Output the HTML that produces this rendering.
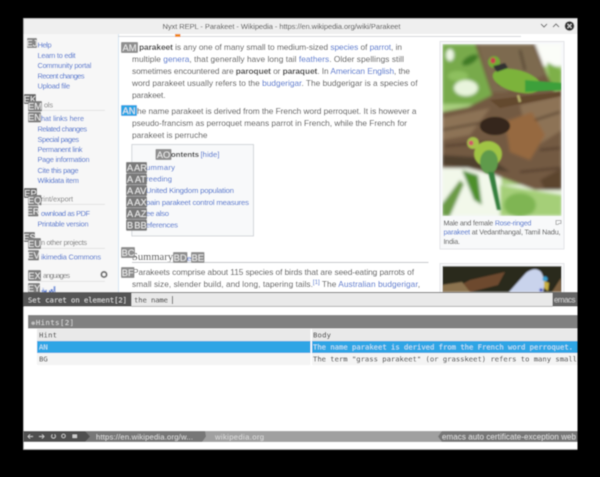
<!DOCTYPE html>
<html><head><meta charset="utf-8"><style>
html,body{margin:0;padding:0;background:#000;width:600px;height:477px;overflow:hidden}
svg{display:block}
text{font-family:"Liberation Sans",sans-serif;white-space:pre}
.t{font-size:8.3px;fill:#3c3c3c}
.l{fill:#3366cc}
.s{font-size:7.3px;fill:#3366cc}
.h{font-size:7.3px;fill:#777}
.c{font-size:7.7px;fill:#3366cc}
.cap{font-size:7.1px;fill:#444}
.m{font-family:"DejaVu Sans Mono","Liberation Mono",monospace;font-size:7.2px}
.k{font-size:9.4px;fill:#eee;text-anchor:middle}
.b{font-weight:bold;fill:#222}
</style></head><body>
<svg width="600" height="477" viewBox="0 0 600 477" xmlns="http://www.w3.org/2000/svg">
<defs>
<filter id="g" x="-2%" y="-2%" width="104%" height="104%"><feGaussianBlur stdDeviation="0.42"/></filter>
<filter id="i" x="-5%" y="-5%" width="110%" height="110%"><feGaussianBlur stdDeviation="1.5"/></filter>
<filter id="j" x="-5%" y="-5%" width="110%" height="110%"><feGaussianBlur stdDeviation="0.7"/></filter>
<clipPath id="c1"><rect x="442.5" y="44" width="119" height="172"/></clipPath>
<clipPath id="c2"><rect x="442.5" y="266" width="119" height="26"/></clipPath>
</defs>
<rect width="600" height="477" fill="#000"/>
<g filter="url(#g)">
<!-- window -->
<rect x="23" y="18" width="554.5" height="431.5" fill="#fff"/>
<rect x="23" y="18" width="554.5" height="16" fill="#efefef"/>
<rect x="23" y="18" width="554.5" height="1" fill="#bbb"/>
<rect x="23" y="449" width="554.5" height="1" fill="#999"/>
<rect x="23" y="18" width="0.8" height="432" fill="#999"/>
<text x="162.5" y="29" font-size="7.5" fill="#444" textLength="238">Nyxt REPL - Parakeet - Wikipedia - https://en.wikipedia.org/wiki/Parakeet</text>
<path d="M541 24l3 3 3-3M553 27l3-3 3 3" fill="none" stroke="#666" stroke-width="1"/>
<circle cx="569.5" cy="26" r="4.8" fill="#333"/>
<path d="M567.5 24l4 4M571.5 24l-4 4" stroke="#ddd" stroke-width="1"/>
<!-- sidebar -->
<rect x="23.8" y="34" width="94.5" height="258" fill="#f7f7f7"/>
<rect x="118" y="34" width="1" height="258" fill="#d5e4f2"/>
<rect x="118" y="36" width="403" height="0.8" fill="#c8ccd1"/>
<rect x="175" y="34" width="5.5" height="3" fill="#f08a1d"/>
<g class="s">
<text class="s" x="37.5" y="47.5" textLength="14">Help</text>
<text class="s" x="37.5" y="58" textLength="38">Learn to edit</text>
<text class="s" x="37.5" y="68" textLength="54">Community portal</text>
<text class="s" x="37.5" y="78.5" textLength="47">Recent changes</text>
<text class="s" x="37.5" y="88.5" textLength="32.5">Upload file</text>
<text class="h" x="44" y="107.5" textLength="9">ols</text>
<rect x="37" y="110" width="68" height="0.7" fill="#ddd"/>
<text class="s" x="41" y="121" textLength="43">hat links here</text>
<text class="s" x="37.5" y="131.5" textLength="49.5">Related changes</text>
<text class="s" x="37.5" y="142" textLength="41.5">Special pages</text>
<text class="s" x="37.5" y="152" textLength="45">Permanent link</text>
<text class="s" x="37.5" y="162" textLength="52">Page information</text>
<text class="s" x="37.5" y="173" textLength="41">Cite this page</text>
<text class="s" x="37.5" y="183" textLength="41.5">Wikidata item</text>
<text class="h" x="41" y="201.5" textLength="32">rint/export</text>
<rect x="37" y="204" width="68" height="0.7" fill="#ddd"/>
<text class="s" x="41" y="216" textLength="49">ownload as PDF</text>
<text class="s" x="37.5" y="226.5" textLength="51">Printable version</text>
<text class="h" x="41" y="245" textLength="46">n other projects</text>
<rect x="37" y="248" width="68" height="0.7" fill="#ddd"/>
<text class="s" x="41" y="259.5" textLength="60">ikimedia Commons</text>
<text class="h" x="43" y="278" textLength="27">anguages</text>
<rect x="37" y="281" width="68" height="0.7" fill="#ddd"/>
<text class="s" x="41" y="292" textLength="15">العربية</text>
</g>
<circle cx="104" cy="274.5" r="2.6" fill="none" stroke="#777" stroke-width="2"/>
<!-- main text -->
<text class="t" x="139" y="50" textLength="263"><tspan class="b" font-weight="bold">parakeet</tspan> is any one of many small to medium-sized <tspan class="l">species</tspan> of <tspan class="l">parrot</tspan>, in</text>
<text class="t" x="132" y="62" textLength="272">multiple <tspan class="l">genera</tspan>, that generally have long tail <tspan class="l">feathers</tspan>. Older spellings still</text>
<text class="t" x="132" y="74" textLength="278">sometimes encountered are <tspan class="b" font-weight="bold">paroquet</tspan> or <tspan class="b" font-weight="bold">paraquet</tspan>. In <tspan class="l">American English</tspan>, the</text>
<text class="t" x="132" y="86" textLength="285.5">word parakeet usually refers to the <tspan class="l">budgerigar</tspan>. The budgerigar is a species of</text>
<text class="t" x="132" y="98" textLength="33.5">parakeet.</text>
<text class="t" x="137" y="114" textLength="279.5">he name parakeet is derived from the French word perroquet. It is however a</text>
<text class="t" x="132" y="126" textLength="275">pseudo-francism as perroquet means parrot in French, while the French for</text>
<text class="t" x="132" y="138" textLength="75.5">parakeet is perruche</text>
<!-- toc -->
<rect x="131.8" y="144.5" width="121.7" height="91.5" fill="#f8f9fa" stroke="#c8ccd1" stroke-width="0.8"/>
<text x="171" y="157" font-size="7.7" font-weight="bold" fill="#222" textLength="28">ontents</text>
<text x="200.5" y="157" font-size="7.7" fill="#3366cc" textLength="19">[hide]</text>
<text class="c" x="146" y="170" textLength="29">ummary</text>
<text class="c" x="146" y="181.5" textLength="26">reeding</text>
<text class="c" x="146" y="193" textLength="88">United Kingdom population</text>
<text class="c" x="146" y="205" textLength="103">pain parakeet control measures</text>
<text class="c" x="146" y="216" textLength="23">ee also</text>
<text class="c" x="146" y="227.5" textLength="32">eferences</text>
<!-- summary -->
<text x="132" y="260" style="font-family:'Liberation Serif',serif" font-size="10.5" fill="#222" textLength="41">Summary</text>
<text x="187" y="261" font-size="7.7" fill="#3366cc">e</text>
<rect x="132" y="262" width="296.5" height="0.8" fill="#b5b8bc"/>
<text class="t" x="133" y="275" textLength="281">Parakeets comprise about 115 species of birds that are seed-eating parrots of</text>
<text class="t" x="132" y="287" textLength="288">small size, slender build, and long, tapering tails.<tspan class="l" font-size="6" dy="-3">[1]</tspan><tspan dy="3"> The </tspan><tspan class="l">Australian budgerigar</tspan>,</text>
<!-- image 1 -->
<rect x="440" y="41.5" width="124" height="207.5" fill="#f8f9fa" stroke="#e0e2e5" stroke-width="0.9"/>
<g clip-path="url(#c1)">
<g filter="url(#i)">
<rect x="442" y="44" width="120" height="172" fill="#a8cf7e"/>
<rect x="442" y="44" width="50" height="60" fill="#78aa4c"/>
<ellipse cx="466" cy="88" rx="12" ry="8" fill="#e8f4dc"/>
<ellipse cx="450" cy="55" rx="4" ry="6" fill="#eef7e5"/>
<ellipse cx="470" cy="60" rx="9" ry="4" fill="#3f7a28" transform="rotate(-30 470 60)"/>
<ellipse cx="458" cy="76" rx="10" ry="5" fill="#8ec05e"/>
<rect x="532" y="44" width="30" height="22" fill="#fbfdf8"/>
<path d="M547 62L562 70V90H550Z" fill="#7eb04a"/>
<rect x="442" y="185" width="120" height="31" fill="#e9f3dd"/>
<path d="M442 168H500L505 216H442Z" fill="#f2f8ea"/>
<path d="M500 185L562 195V216H500Z" fill="#a5cf78"/>
<path d="M462 170L478 175 482 205 474 200Z" fill="#4e8f2c"/>
<path d="M442 204L460 180 464 184 450 216H442Z" fill="#6a9a45"/>
<ellipse cx="520" cy="205" rx="16" ry="12" fill="#7fb552"/>
<path d="M442 112L468 107 492 95 475 44H535L547 75 555 92 562 90V190H535L495 175 468 168H442Z" fill="#735a42"/>
<path d="M478 44H532L545 75 505 92 492 92Z" fill="#7d6a50"/>
<path d="M442 118L490 108 470 135 442 140ZM520 105L562 96V130L530 150Z" fill="#8d7356"/>
<path d="M442 155L490 158 510 172 470 168 442 165Z" fill="#50402f"/>
<path d="M505 122L532 112 545 135 530 160 510 152Z" fill="#96693f"/>
<path d="M442 130L485 122M445 146L490 142M520 172L560 168M535 120L560 112M540 150L560 148M495 60L500 85M520 50L525 70" stroke="#3f2e20" stroke-width="1.600" fill="none"/>
<path d="M540 180L562 168V190H545Z" fill="#5b442f"/>
</g>
<g filter="url(#j)">
<ellipse cx="495" cy="126" rx="15" ry="9" fill="#35261a"/>
<path d="M490 100L560 92V96L500 108Z" fill="#63492f"/>
<ellipse cx="517" cy="81" rx="25" ry="11" fill="#7cb33a" transform="rotate(15 517 81)"/>
<path d="M525 80L562 83 562 90 525 92Z" fill="#3ea03a"/>
<ellipse cx="494" cy="62" rx="6" ry="6" fill="#72ab36"/>
<ellipse cx="493" cy="60.500" rx="2.600" ry="3" fill="#c73f4e"/>
<path d="M493 66L505 63 508 68 497 72Z" fill="#333"/>
<path d="M518 95l2 7" stroke="#b5b06a" stroke-width="2.500"/>
<ellipse cx="488" cy="154" rx="14" ry="13" fill="#a0c444"/>
<ellipse cx="473" cy="143" rx="6" ry="6" fill="#a5c34a"/>
<circle cx="471" cy="143" r="2.500" fill="#d0556a"/>
<ellipse cx="489" cy="162" rx="9" ry="12" fill="#5f9a4c"/>
<path d="M488 172L494 172 501 210 497 210Z" fill="#35803c"/>
</g></g>
<path d="M556 220.500h5v3h-2l-1 1h-2z" fill="none" stroke="#999" stroke-width="0.8"/>
<text class="cap" x="443.500" y="225.500" textLength="88">Male and female <tspan class="l">Rose-ringed</tspan></text>
<text class="cap" x="443.500" y="234.500" textLength="117"><tspan class="l">parakeet</tspan> at Vedanthangal, Tamil Nadu,</text>
<text class="cap" x="443.500" y="244" textLength="16.500">India.</text>
<!-- image 2 -->
<rect x="440" y="263.500" width="124" height="30" fill="#f8f9fa" stroke="#e0e2e5" stroke-width="0.900"/>
<g clip-path="url(#c2)"><g filter="url(#j)">
<rect x="442" y="266" width="120" height="26" fill="#2a2a1c"/>
<path d="M448 292L470 280 505 272 498 285 470 292Z" fill="#6d4a2e"/>
<path d="M442 285L462 282 470 292H442Z" fill="#8b7350"/>
<path d="M552 292L561 278 562 292Z" fill="#7b6040"/>
<path d="M509 292L526 273Q535 266 541 272 546 280 543 292Z" fill="#c9d3ec"/>
<circle cx="545" cy="279" r="2.500" fill="#3aa0d0"/>
<path d="M544 281L549 283 548 291 544 288Z" fill="#c9b040"/>
<circle cx="541" cy="290" r="1.600" fill="#3344bb"/>
</g></g>
<!-- hints -->
<g fill="#fff">
<rect x="27" y="38" width="10" height="10" fill="#858585" rx="1"/><text class="k" x="32" y="46.500">EJ</text>
<rect x="24" y="94" width="12" height="10" fill="#666" rx="1"/><text class="k" x="30" y="102.500">EK</text>
<rect x="28" y="101" width="14" height="10.500" fill="#808080" rx="1"/><text class="k" x="35" y="109.500">EM</text>
<rect x="28" y="112" width="13" height="10.500" fill="#808080" rx="1"/><text class="k" x="34.500" y="120.500">EN</text>
<rect x="24" y="188" width="13" height="10" fill="#666" rx="1"/><text class="k" x="30.500" y="196.500">EP</text>
<rect x="28" y="195" width="13.500" height="10.500" fill="#808080" rx="1"/><text class="k" x="34.700" y="203.500">EQ</text>
<rect x="28" y="206" width="10.500" height="10.500" fill="#808080" rx="1"/><text class="k" x="33.200" y="214.500">ER</text>
<rect x="24" y="232" width="11" height="10" fill="#777" rx="1"/><text class="k" x="29.500" y="240.500">ES</text>
<rect x="28" y="238" width="13" height="11" fill="#808080" rx="1"/><text class="k" x="34.500" y="247">EU</text>
<rect x="28" y="250" width="11" height="10.500" fill="#808080" rx="1"/><text class="k" x="33.500" y="258.500">EV</text>
<rect x="28" y="270" width="13" height="11" fill="#808080" rx="1"/><text class="k" x="34.500" y="279">EX</text>
<rect x="28" y="283" width="12" height="10" fill="#808080" rx="1"/><text class="k" x="34" y="291.500">EY</text>
<rect x="121" y="42" width="17" height="11" fill="#8f8f8f" rx="1"/><text class="k" x="129.500" y="51">AM</text>
<rect x="121" y="105" width="16" height="11" fill="#2fa5e5" rx="1"/><text class="k" x="129" y="114">AN</text>
<rect x="155.500" y="149" width="16" height="11" fill="#8f8f8f" rx="1"/><text class="k" x="163.500" y="158">AO</text>
<rect x="126" y="162" width="21" height="11.200" fill="#7a7a7a" rx="1"/><text class="k" x="130" y="171">A</text><text class="k" x="140.500" y="171">AR</text>
<rect x="126" y="173.500" width="21" height="11.200" fill="#7a7a7a" rx="1"/><text class="k" x="130" y="182.500">A</text><text class="k" x="140.500" y="182.500">AT</text>
<rect x="126" y="185" width="21" height="11.200" fill="#7a7a7a" rx="1"/><text class="k" x="130" y="194">A</text><text class="k" x="140.500" y="194">AV</text>
<rect x="126" y="196.500" width="21" height="11.200" fill="#7a7a7a" rx="1"/><text class="k" x="130" y="205.500">A</text><text class="k" x="140.500" y="205.500">AX</text>
<rect x="126" y="208" width="21" height="11.200" fill="#7a7a7a" rx="1"/><text class="k" x="130" y="217">A</text><text class="k" x="140.500" y="217">AZ</text>
<rect x="126" y="219.500" width="21" height="11.200" fill="#7a7a7a" rx="1"/><text class="k" x="130" y="228.500">B</text><text class="k" x="140.500" y="228.500">BB</text>
<rect x="121" y="247" width="14" height="11" fill="#8f8f8f" rx="1"/><text class="k" x="128" y="256">BC</text>
<rect x="173" y="252" width="14.500" height="11" fill="#8f8f8f" rx="1"/><text class="k" x="180.200" y="261">BD</text>
<rect x="191" y="252" width="13.500" height="11" fill="#8f8f8f" rx="1"/><text class="k" x="197.700" y="261">BE</text>
<rect x="121" y="267" width="13.500" height="11" fill="#8f8f8f" rx="1"/><text class="k" x="127.700" y="276">BF</text>
</g>
<!-- prompt -->
<rect x="23" y="292" width="554.500" height="15" fill="#6a6a6a"/>
<rect x="23" y="292.500" width="108" height="14" fill="#555"/>
<text class="m" x="28" y="302.500" fill="#ddd" textLength="99">Set caret on element[2]</text>
<rect x="131.500" y="293" width="421" height="13" fill="#e9e9e9"/>
<text class="m" x="134" y="302.500" fill="#111" textLength="34">the name</text>
<rect x="172" y="296" width="0.800" height="8" fill="#333"/>
<rect x="552.500" y="293" width="25" height="13" fill="#666"/>
<text x="554" y="302.500" font-size="8" fill="#ccc" textLength="21.500">emacs</text>
<rect x="23.800" y="306.500" width="553.700" height="124" fill="#fff"/>
<rect x="131.500" y="306" width="421" height="0.800" fill="#999"/>
<!-- hints table -->
<rect x="28" y="315" width="549.500" height="13.500" fill="#808080"/>
<text class="m" x="31" y="325" fill="#ddd" textLength="43">❋Hints[2]</text>
<rect x="37" y="329" width="273.500" height="12" fill="#e9e9e9"/>
<rect x="312" y="329" width="265.500" height="12" fill="#e9e9e9"/>
<text class="m" x="39" y="337.500" fill="#111" textLength="18">Hint</text>
<text class="m" x="313" y="337.500" fill="#111" textLength="18">Body</text>
<rect x="37" y="341" width="273.500" height="12" fill="#2fa5e5"/>
<rect x="312" y="341" width="265.500" height="12" fill="#2fa5e5"/>
<text class="m" x="39" y="349.500" fill="#cfeaf8">AN</text>
<text class="m" x="313" y="349.500" fill="#cfeaf8" textLength="260">The name parakeet is derived from the French word perroquet.</text>
<rect x="37" y="353" width="273.500" height="12" fill="#f4f4f4"/>
<rect x="312" y="353" width="265.500" height="12" fill="#f4f4f4"/>
<text class="m" x="39" y="361.500" fill="#222">BG</text>
<text class="m" x="313" y="361.500" fill="#111" textLength="264">The term "grass parakeet" (or grasskeet) refers to many small</text>
<!-- status -->
<rect x="23" y="431" width="554.500" height="11" fill="#a0a0a0"/>
<path d="M205 431H23.500V442H202l4-5.500Z" fill="#777"/>
<path d="M85 431H23.500V442H85l5-5.500Z" fill="#4f4f4f"/>
<path d="M577.500 431H442l-4 5.500 4 5.500H577.500Z" fill="#777"/>
<g fill="none" stroke="#ddd" stroke-width="0.700">
<path d="M28 436.500h5M30 434.500l-2 2 2 2M39 436.500h5M42 434.500l2 2-2 2"/>
<path d="M54.500 434.500a2 2 0 1 1-2 0"/>
<circle cx="63.500" cy="436" r="1.800"/>
<rect x="72.500" y="434.500" width="4.500" height="3.500" fill="#ccc" stroke="none"/>
</g>
<text x="96" y="439.500" font-size="7.700" fill="#ddd" textLength="97">https://en.wikipedia.org/w...</text>
<text x="215" y="439.500" font-size="7.700" fill="#ddd" textLength="49">wikipedia.org</text>
<text x="442" y="439.500" font-size="8" fill="#ddd" textLength="134">emacs auto certificate-exception web</text>
</g>
</svg>
</body></html>
